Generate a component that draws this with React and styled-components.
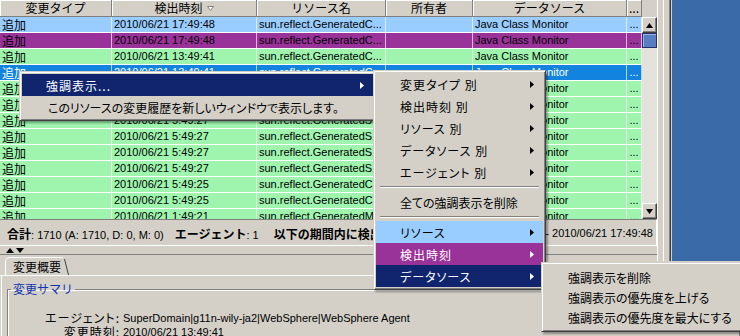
import React from "react";
import styled, { createGlobalStyle } from "styled-components";

const jp = `"Noto Sans CJK JP", "Liberation Sans", sans-serif`;
const sans = `"Liberation Sans", "Noto Sans CJK JP", sans-serif`;

const GlobalStyle = createGlobalStyle`
  html, body { margin: 0; padding: 0; }
  body { background: #d4d0c8; font-family: ${sans}; }
`;

const Screen = styled.div`
  position: relative;
  width: 740px;
  height: 336px;
  overflow: hidden;
  background: #d4d0c8;
  color: #000;
`;

const TopArea = styled.div`
  display: flex;
  height: 255px;
`;

const MainPane = styled.div`
  width: 657px;
  display: flex;
  flex-direction: column;
`;

const TableArea = styled.div`
  display: flex;
  height: 219px;
`;

const Table = styled.div`
  width: 642px;
  display: flex;
  flex-direction: column;
  overflow: hidden;
`;

const cols = "112px 145px 129px 87px 154px 15px";

const HeaderRow = styled.div`
  display: grid;
  grid-template-columns: ${cols};
  height: 17px;
  flex: none;
`;

const HeaderCell = styled.div`
  box-sizing: border-box;
  display: flex;
  align-items: center;
  justify-content: center;
  gap: 4px;
  border-right: 1px solid #808080;
  border-bottom: 1px solid #808080;
  box-shadow: inset 1px 1px 0 #fff;
  font: 12px/16px ${jp};
  white-space: nowrap;
  overflow: hidden;
`;

const Row = styled.div`
  display: grid;
  grid-template-columns: ${cols};
  height: 16px;
  flex: none;
  box-sizing: border-box;
  border-bottom: 1px solid #fff;
  background: ${(p) => p.$bg};
  color: ${(p) => p.$fg || "#000"};
`;

const Cell = styled.div`
  box-sizing: border-box;
  border-right: 1px solid rgba(255, 255, 255, 0.65);
  padding-left: ${(p) => (p.$center ? 0 : "2px")};
  text-align: ${(p) => (p.$center ? "center" : "left")};
  font: ${(p) => (p.$jp ? `12px/15px ${jp}` : `11px/15px ${sans}`)};
  white-space: nowrap;
  overflow: hidden;
`;

const Scrollbar = styled.div`
  width: 15px;
  display: flex;
  flex-direction: column;
`;

const ScrollCorner = styled.div`
  height: 17px;
`;

const ScrollButton = styled.div`
  box-sizing: border-box;
  height: 16px;
  display: flex;
  align-items: center;
  justify-content: center;
  background: #d4d0c8;
  border: 1px solid;
  border-color: #fff #404040 #404040 #fff;
  box-shadow: inset -1px -1px 0 #808080;
`;

const Thumb = styled.div`
  box-sizing: border-box;
  height: 15px;
  background: #5a7cc0;
  border: 1px solid #24306a;
  box-shadow: inset 1px 1px 0 #9ab4e8;
`;

const Track = styled.div`
  flex: 1;
  background: #e4e2dc;
`;

const Strip = styled.div`
  width: 15px;
  height: 261px;
  flex: none;
  background: linear-gradient(
    90deg,
    #fff 0 1px,
    #d4d0c8 1px 6px,
    #fff 6px 7px,
    #d4d0c8 7px 12px,
    #808080 12px 13px,
    #404040 13px 14px,
    #d4d0c8 14px 15px
  );
`;

const Desktop = styled.div`
  flex: 1;
  height: 261px;
  background: #3a6aa8;
`;

const StatusBar = styled.div`
  box-sizing: border-box;
  height: 28px;
  display: flex;
  align-items: center;
  justify-content: space-between;
  padding: 1px 3px 0 7px;
  border-top: 1px solid #808080;
  border-bottom: 1px solid #fff;
  border-right: 1px solid #fff;
  font: 11px ${sans};
  white-space: nowrap;
`;

const StatusGroup = styled.span`
  margin-right: ${(p) => p.$gap || 0}px;
`;

const Bold = styled.b`
  font: bold 12px ${jp};
`;

const Splitter = styled.div`
  height: 8px;
  display: flex;
  align-items: center;
  gap: 2px;
  padding-left: 6px;
  border-bottom: 1px solid #808080;
`;

const BottomPanel = styled.div`
  position: relative;
`;

const TabStrip = styled.div`
  height: 20px;
  display: flex;
  align-items: flex-end;
  padding-left: 5px;
  border-bottom: 1px solid #fff;
`;

const Tab = styled.div`
  position: relative;
  box-sizing: border-box;
  height: 18px;
  width: 58px;
  padding-left: 7px;
  border-left: 1px solid #fff;
  border-top: 1px solid #fff;
  border-top-left-radius: 5px;
  font: 12px/17px ${jp};
  &::after {
    content: "";
    position: absolute;
    right: -4px;
    top: 1px;
    bottom: 0;
    width: 5px;
    border-right: 1px solid #404040;
    transform: skewX(14deg);
  }
`;

const TabBody = styled.div`
  border-left: 1px solid #fff;
  margin-left: 1px;
  padding: 6px 0 0 5px;
  height: 80px;
`;

const Group = styled.fieldset`
  margin: 0;
  padding: 15px 0 0 0;
  border: 1px solid #808080;
  box-shadow: inset 1px 1px 0 #fff, 1px 1px 0 #fff;
  height: 80px;
`;

const GroupTitle = styled.legend`
  margin-left: 3px;
  padding: 0 2px;
  font: 12px/14px ${jp};
  color: #1034b0;
`;

const InfoGrid = styled.div`
  display: grid;
  grid-template-columns: 112px auto;
  column-gap: 3px;
  font: 11px/14px ${sans};
  white-space: nowrap;
`;

const InfoLabel = styled.div`
  text-align: right;
  font: 12px/14px ${jp};
  font-feature-settings: "palt";
  letter-spacing: 1px;
`;

const Menu = styled.div`
  position: absolute;
  left: ${(p) => p.$x}px;
  top: ${(p) => p.$y}px;
  width: ${(p) => p.$w}px;
  box-sizing: border-box;
  padding: ${(p) => p.$pad || "2px"};
  background: #d4d0c8;
  border: 1px solid;
  border-color: #d4d0c8 #404040 #404040 #d4d0c8;
  box-shadow: inset 1px 1px 0 #fff, inset -1px -1px 0 #808080,
    2px 2px 2px rgba(0, 0, 0, 0.35);
  z-index: ${(p) => p.$z || 1};
`;

const MenuItem = styled.div`
  height: ${(p) => p.$h || 22}px;
  display: flex;
  align-items: center;
  justify-content: space-between;
  padding: 0 ${(p) => p.$right || 9}px 0 ${(p) => p.$left || 24}px;
  background: ${(p) => p.$bg || "transparent"};
  color: ${(p) => p.$fg || "#000"};
  font: 12px ${jp};
  font-feature-settings: "palt";
  letter-spacing: ${(p) => p.$ls || "0px"};
  white-space: nowrap;
`;

const Separator = styled.div`
  margin: 3px 4px;
  height: 0;
  border-top: 1px solid #808080;
  border-bottom: 1px solid #fff;
`;

function Arrow({ color = "#000" }) {
  return (
    <svg width="4" height="7" viewBox="0 0 4 7">
      <path d="M0 0L4 3.5L0 7Z" fill={color} />
    </svg>
  );
}

function Tri({ up, size = 7 }) {
  const h = Math.round(size / 2) + 1;
  return (
    <svg width={size} height={h} viewBox={`0 0 ${size} ${h}`}>
      <path
        d={up ? `M0 ${h}L${size / 2} 0L${size} ${h}Z` : `M0 0L${size / 2} ${h}L${size} 0Z`}
        fill="#000"
      />
    </svg>
  );
}

function SortMark() {
  return (
    <svg width="7" height="5" viewBox="0 0 7 5">
      <path d="M0.5 0.5H6.5L3.5 4.5Z" fill="#fff" stroke="#808080" />
    </svg>
  );
}

const green = "#9ff5ae";
const rows = [
  { bg: "#99ccff", time: "2010/06/21 17:49:48", res: "sun.reflect.GeneratedC..." },
  { bg: "#993399", time: "2010/06/21 17:49:48", res: "sun.reflect.GeneratedC..." },
  { bg: green, time: "2010/06/21 13:49:41", res: "sun.reflect.GeneratedC..." },
  { bg: "#1284e0", fg: "#fff", time: "2010/06/21 13:49:41", res: "sun.reflect.GeneratedC..." },
  { bg: green, time: "2010/06/21 5:49:27", res: "sun.reflect.GeneratedS..." },
  { bg: green, time: "2010/06/21 5:49:27", res: "sun.reflect.GeneratedS..." },
  { bg: green, time: "2010/06/21 5:49:27", res: "sun.reflect.GeneratedS..." },
  { bg: green, time: "2010/06/21 5:49:27", res: "sun.reflect.GeneratedS..." },
  { bg: green, time: "2010/06/21 5:49:27", res: "sun.reflect.GeneratedS..." },
  { bg: green, time: "2010/06/21 5:49:27", res: "sun.reflect.GeneratedS..." },
  { bg: green, time: "2010/06/21 5:49:25", res: "sun.reflect.GeneratedC..." },
  { bg: green, time: "2010/06/21 5:49:25", res: "sun.reflect.GeneratedC..." },
  { bg: green, time: "2010/06/21 1:49:21", res: "sun.reflect.GeneratedM..." },
];

export default function App() {
  return (
    <Screen>
      <GlobalStyle />
      <TopArea>
        <MainPane>
          <TableArea>
            <Table>
              <HeaderRow>
                <HeaderCell>変更タイプ</HeaderCell>
                <HeaderCell>
                  検出時刻 <SortMark />
                </HeaderCell>
                <HeaderCell>リソース名</HeaderCell>
                <HeaderCell>所有者</HeaderCell>
                <HeaderCell>データソース</HeaderCell>
                <HeaderCell>...</HeaderCell>
              </HeaderRow>
              {rows.map((r, i) => (
                <Row key={i} $bg={r.bg} $fg={r.fg}>
                  <Cell $jp>追加</Cell>
                  <Cell>{r.time}</Cell>
                  <Cell>{r.res}</Cell>
                  <Cell />
                  <Cell>Java Class Monitor</Cell>
                  <Cell $center>...</Cell>
                </Row>
              ))}
            </Table>
            <Scrollbar>
              <ScrollCorner />
              <ScrollButton>
                <Tri up />
              </ScrollButton>
              <Thumb />
              <Track />
              <ScrollButton>
                <Tri />
              </ScrollButton>
            </Scrollbar>
          </TableArea>
          <StatusBar>
            <span>
              <StatusGroup $gap={11}>
                <Bold>合計</Bold>: 1710 (A: 1710, D: 0, M: 0)
              </StatusGroup>
              <StatusGroup $gap={15}>
                <Bold>エージェント</Bold>: 1
              </StatusGroup>
              <StatusGroup>
                <Bold>以下の期間内に検出</Bold>
              </StatusGroup>
            </span>
            <span>- 2010/06/21 17:49:48</span>
          </StatusBar>
          <Splitter>
            <Tri up size={8} />
            <Tri size={8} />
          </Splitter>
        </MainPane>
        <Strip />
        <Desktop />
      </TopArea>

      <BottomPanel>
        <TabStrip>
          <Tab>変更概要</Tab>
        </TabStrip>
        <TabBody>
          <Group>
            <GroupTitle>変更サマリ</GroupTitle>
            <InfoGrid>
              <InfoLabel>エージェント:</InfoLabel>
              <div>SuperDomain|g11n-wily-ja2|WebSphere|WebSphere Agent</div>
              <InfoLabel>変更時刻:</InfoLabel>
              <div>2010/06/21 13:49:41</div>
            </InfoGrid>
          </Group>
        </TabBody>
      </BottomPanel>

      <Menu $x={19} $y={71} $w={357}>
        <MenuItem $bg="#10256e" $fg="#fff" $left={24} $ls="1px">
          強調表示...
          <Arrow color="#fff" />
        </MenuItem>
        <MenuItem $left={26}>
          このリソースの変更履歴を新しいウィンドウで表示します。
        </MenuItem>
      </Menu>

      <Menu $x={373} $y={70} $w={173} $z={2}>
        <MenuItem $ls="1px">
          変更タイプ 別<Arrow />
        </MenuItem>
        <MenuItem $ls="1px">
          検出時刻 別<Arrow />
        </MenuItem>
        <MenuItem $ls="1px">
          リソース 別<Arrow />
        </MenuItem>
        <MenuItem $ls="1px">
          データソース 別<Arrow />
        </MenuItem>
        <MenuItem $ls="1px">
          エージェント 別<Arrow />
        </MenuItem>
        <Separator />
        <MenuItem>全ての強調表示を削除</MenuItem>
        <Separator />
        <MenuItem $bg="#99ccff" $ls="1px">
          リソース<Arrow />
        </MenuItem>
        <MenuItem $bg="#993399" $fg="#fff" $ls="1px">
          検出時刻<Arrow color="#fff" />
        </MenuItem>
        <MenuItem $bg="#10256e" $fg="#fff" $ls="1px">
          データソース<Arrow color="#fff" />
        </MenuItem>
      </Menu>

      <Menu $x={541} $y={262} $w={210} $pad="4px 2px" $z={3}>
        <MenuItem $h={20} $left={24}>
          強調表示を削除
        </MenuItem>
        <MenuItem $h={20} $left={24}>
          強調表示の優先度を上げる
        </MenuItem>
        <MenuItem $h={20} $left={24}>
          強調表示の優先度を最大にする
        </MenuItem>
      </Menu>
    </Screen>
  );
}
